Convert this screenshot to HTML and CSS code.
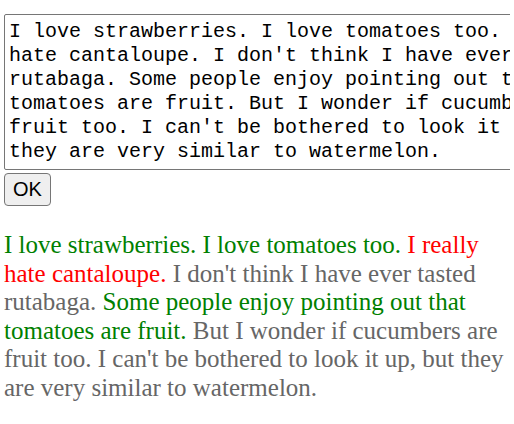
FILE: index.html
```html
<!DOCTYPE html>
<html>
<head>
<meta charset="utf-8">
<link rel="stylesheet" href="styles.css">
</head>
<body>
<div class="editor">
<textarea class="source" rows="6" spellcheck="false">I love strawberries. I love tomatoes too. I really hate cantaloupe. I don't think I have ever tasted rutabaga. Some people enjoy pointing out that tomatoes are fruit. But I wonder if cucumbers are fruit too. I can't be bothered to look it up, but they are very similar to watermelon.</textarea>
<button class="ok" type="button">OK</button>
</div>
<p class="result"><span class="good">I love strawberries. I love tomatoes too.</span> <span class="bad">I really hate cantaloupe.</span> <span class="neutral">I don't think I have ever tasted rutabaga.</span> <span class="good">Some people enjoy pointing out that tomatoes are fruit.</span> <span class="neutral">But I wonder if cucumbers are fruit too. I can't be bothered to look it up, but they are very similar to watermelon.</span></p>
</body>
</html>
```

FILE: styles.css
```css
html, body {
  overflow: hidden;
}
body {
  margin: 14px 4px 0 4px;
  background: #ffffff;
  font-family: "Liberation Serif", "Times New Roman", serif;
}
.editor {
  display: flex;
  flex-direction: column;
  align-items: flex-start;
  gap: 3px;
}
.source {
  display: block;
  box-sizing: border-box;
  width: 640px;
  height: 156px;
  margin: 0;
  padding: 5px 4px;
  border: 1px solid #767676;
  border-radius: 2px;
  font-family: "Courier New", "Nimbus Mono PS", "FreeMono", "Liberation Mono", monospace;
  font-size: 20px;
  line-height: 24px;
  color: #000;
  resize: none;
  overflow: hidden;
}
.ok {
  box-sizing: border-box;
  height: 33px;
  margin: 0;
  padding: 0 8px;
  border: 1px solid #767676;
  border-radius: 4px;
  background: #efefef;
  font-family: "Liberation Sans", Arial, sans-serif;
  font-size: 20px;
  color: #000;
}
.result {
  margin: 25px 0 0 0;
  font-size: 25px;
  line-height: 28.6px;
}
.good { color: #008000; }
.bad { color: #ff0000; }
.neutral { color: #666666; }
```
